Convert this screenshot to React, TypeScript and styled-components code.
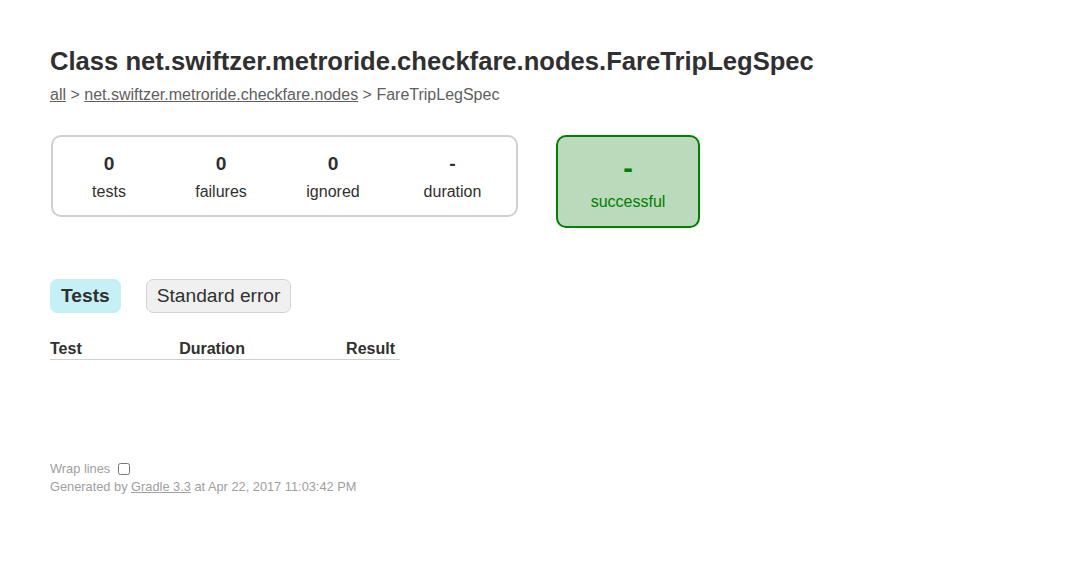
import React from 'react'
import styled, {createGlobalStyle} from 'styled-components'

const GlobalStyle = createGlobalStyle`
  body {
    margin: 0;
    padding: 0;
    font-family: "Liberation Sans", Arial, sans-serif;
    font-size: 16px;
    color: #303030;
    background: #ffffff;
  }
`

const Content = styled.div`
  padding: 30px 50px;
`

const Title = styled.h1`
  font-size: 25.6px;
  font-weight: bold;
  margin: 17px 0 10px 0;
  white-space: nowrap;
`

const Breadcrumbs = styled.div`
  color: #606060;
  a {
    color: #606060;
  }
`

const Summary = styled.div`
  display: flex;
  align-items: flex-start;
  margin-top: 30px;
  margin-bottom: 40px;
`

const SummaryGroup = styled.div`
  display: flex;
  border: solid 2px #d0d0d0;
  border-radius: 10px;
  margin: 1px;
`

const InfoBox = styled.div<{$width?: number}>`
  width: ${p => p.$width || 110}px;
  padding: 16px 0 14px 0;
  margin: 0 1px;
  text-align: center;
`

const Counter = styled.div`
  font-size: 19.2px;
  font-weight: bold;
  margin-bottom: 8px;
`

const Label = styled.div``

const SuccessRate = styled.div`
  width: 140px;
  margin: 1px 1px 1px 37px;
  padding: 15px 0;
  text-align: center;
  border: solid 2px #008000;
  border-radius: 10px;
  background-color: #bbd9bb;
  color: #008000;
`

const Percent = styled.div`
  font-size: 28.8px;
  font-weight: bold;
  margin-bottom: 8px;
`

const TabLinks = styled.ul`
  display: flex;
  list-style: none;
  margin: 0 0 16px 0;
  padding: 10px 0;
`

const TabLink = styled.li<{$selected?: boolean}>`
  padding: 5px 10px;
  margin-right: 25px;
  border-radius: 7px;
  border: solid 1px ${p => (p.$selected ? '#c5f0f5' : '#d4d4d4')};
  background-color: ${p => (p.$selected ? '#c5f0f5' : '#f0f0f0')};
  a {
    display: block;
    font-size: 19.2px;
    font-weight: ${p => (p.$selected ? 'bold' : 'normal')};
    color: #303030;
    text-decoration: none;
  }
`

const TestTable = styled.table`
  min-width: 350px;
  border-collapse: collapse;
  border-bottom: solid #d0d0d0 1px;
`

const Th = styled.th<{$numeric?: boolean}>`
  text-align: ${p => (p.$numeric ? 'right' : 'left')};
  white-space: nowrap;
  padding: 1px ${p => (p.$numeric ? 5 : 1)}px 1px 96px;
  border-bottom: solid #d0d0d0 1px;
  &:first-child {
    padding-left: 0;
  }
`

const Footer = styled.div`
  margin-top: 100px;
  font-size: 12.8px;
  line-height: 18px;
  white-space: nowrap;
  color: #a0a0a0;
  a {
    color: #a0a0a0;
  }
`

const WrapRow = styled.div`
  display: flex;
  align-items: center;
  gap: 4px;
`

const Checkbox = styled.input`
  margin: 0 3px 0 4px;
  width: 12px;
  height: 12px;
  accent-color: #808080;
`

const stats = [
  {value: '0', label: 'tests'},
  {value: '0', label: 'failures'},
  {value: '0', label: 'ignored'},
  {value: '-', label: 'duration', width: 125},
]

const App: React.FC = () =>
  <>
    <GlobalStyle />
    <Content>
      <Title>Class net.swiftzer.metroride.checkfare.nodes.FareTripLegSpec</Title>
      <Breadcrumbs>
        <a href="#">all</a> &gt; <a href="#">net.swiftzer.metroride.checkfare.nodes</a> &gt; FareTripLegSpec
      </Breadcrumbs>
      <Summary>
        <SummaryGroup>
          {stats.map(s =>
            <InfoBox key={s.label} $width={s.width}>
              <Counter>{s.value}</Counter>
              <Label>{s.label}</Label>
            </InfoBox>
          )}
        </SummaryGroup>
        <SuccessRate>
          <Percent>-</Percent>
          <Label>successful</Label>
        </SuccessRate>
      </Summary>
      <TabLinks>
        <TabLink $selected><a href="#tab0">Tests</a></TabLink>
        <TabLink><a href="#tab1">Standard error</a></TabLink>
      </TabLinks>
      <TestTable>
        <thead>
          <tr>
            <Th>Test</Th>
            <Th>Duration</Th>
            <Th $numeric>Result</Th>
          </tr>
        </thead>
      </TestTable>
      <Footer>
        <WrapRow>
          <span>Wrap lines</span>
          <Checkbox type="checkbox" />
        </WrapRow>
        <div>
          Generated by <a href="#">Gradle 3.3</a> at Apr 22, 2017 11:03:42 PM
        </div>
      </Footer>
    </Content>
  </>

export default App
